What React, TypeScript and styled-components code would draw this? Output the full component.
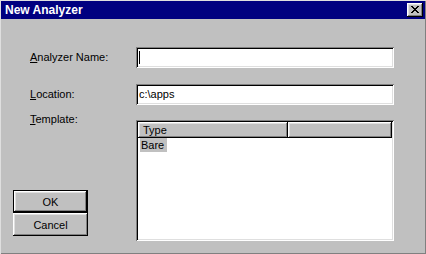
import React from "react";
import styled, { createGlobalStyle } from "styled-components";

const Global = createGlobalStyle`
  html, body { margin: 0; padding: 0; background: #c0c0c0; }
  * { box-sizing: border-box; }
`;

const raised = `
  box-shadow: inset -1px -1px #000, inset 1px 1px #fff, inset -2px -2px #808080, inset 2px 2px #dfdfdf;
`;
const sunken = `
  box-shadow: inset 1px 1px #808080, inset -1px -1px #fff, inset 2px 2px #000, inset -2px -2px #dfdfdf;
`;

const Window = styled.div`
  width: 426px;
  height: 254px;
  background: #c0c0c0;
  padding: 1px;
  box-shadow: inset 1px 1px #dfdfdf, inset -1px -1px #808080;
  font-family: "Liberation Sans", Arial, sans-serif;
  font-size: 11px;
  color: #000;
  display: flex;
  flex-direction: column;
`;

const TitleBar = styled.div`
  height: 18px;
  background: #000080;
  display: flex;
  align-items: center;
  justify-content: space-between;
  padding: 0 2px 0 4px;
`;

const Title = styled.span`
  color: #fff;
  font-weight: bold;
  font-size: 12px;
`;

const CloseButton = styled.div`
  width: 16px;
  height: 14px;
  background: #c0c0c0;
  ${raised}
  display: flex;
  align-items: center;
  justify-content: center;
  padding: 0 1px 1px 0;
`;

const Body = styled.div`
  padding: 28px 0 0 12px;
  display: flex;
  flex-direction: column;
`;

const Row = styled.div<{ $gap: number }>`
  display: grid;
  grid-template-columns: 123px 258px;
  margin-bottom: ${(p) => p.$gap}px;
`;

const Label = styled.div<{ $top?: boolean }>`
  padding-left: 17px;
  align-self: ${(p) => (p.$top ? "start" : "center")};
  margin-top: ${(p) => (p.$top ? "-7px" : "0")};
  line-height: 13px;
  white-space: nowrap;
`;

const U = styled.span`
  text-decoration: underline;
`;

const Field = styled.div`
  height: 21px;
  background: #fff;
  ${sunken}
  padding: 2px 3px;
  display: flex;
  align-items: center;
  line-height: 13px;
`;

const Caret = styled.div`
  width: 1px;
  height: 13px;
  background: #000;
`;

const LeftCol = styled.div`
  display: flex;
  flex-direction: column;
  justify-content: space-between;
  padding-bottom: 5px;
`;

const Buttons = styled.div`
  display: flex;
  flex-direction: column;
`;

const Button = styled.div<{ $default?: boolean }>`
  width: 75px;
  height: 23px;
  background: #c0c0c0;
  display: flex;
  align-items: center;
  justify-content: center;
  ${(p) =>
    p.$default
      ? `box-shadow: inset 0 0 0 1px #000, inset -2px -2px #000, inset 2px 2px #fff, inset -3px -3px #808080, inset 3px 3px #dfdfdf;`
      : raised}
`;

const List = styled.div`
  height: 121px;
  background: #fff;
  ${sunken}
  padding: 2px;
  display: flex;
  flex-direction: column;
`;

const Header = styled.div`
  display: grid;
  grid-template-columns: 150px 1fr;
  height: 16px;
`;

const HeaderCell = styled.div`
  background: #c0c0c0;
  ${raised}
  padding: 1px 5px 0;
  line-height: 14px;
`;

const Item = styled.div<{ $selected?: boolean }>`
  align-self: flex-start;
  margin-left: 2px;
  padding: 0 3px 0 1px;
  height: 14px;
  line-height: 14px;
  background: ${(p) => (p.$selected ? "#c0c0c0" : "transparent")};
`;

export default function App() {
  return (
    <>
      <Global />
      <Window>
        <TitleBar>
          <Title>New Analyzer</Title>
          <CloseButton>
            <svg width="8" height="7" viewBox="0 0 8 7" shapeRendering="crispEdges">
              <path
                fill="#000"
                d="M0 0h2v1h-2z M6 0h2v1h-2z M1 1h2v1h-2z M5 1h2v1h-2z M2 2h4v1h-4z M3 3h2v1h-2z M2 4h4v1h-4z M1 5h2v1h-2z M5 5h2v1h-2z M0 6h2v1h-2z M6 6h2v1h-2z"
              />
            </svg>
          </CloseButton>
        </TitleBar>
        <Body>
          <Row $gap={16}>
            <Label>
              <U>A</U>nalyzer Name:
            </Label>
            <Field>
              <Caret />
            </Field>
          </Row>
          <Row $gap={15}>
            <Label>
              <U>L</U>ocation:
            </Label>
            <Field>c:\apps</Field>
          </Row>
          <Row $gap={0}>
            <LeftCol>
              <Label $top>
                <U>T</U>emplate:
              </Label>
              <Buttons>
                <Button $default>OK</Button>
                <Button>Cancel</Button>
              </Buttons>
            </LeftCol>
            <List>
              <Header>
                <HeaderCell>Type</HeaderCell>
                <HeaderCell />
              </Header>
              <Item $selected>Bare</Item>
            </List>
          </Row>
        </Body>
      </Window>
    </>
  );
}
